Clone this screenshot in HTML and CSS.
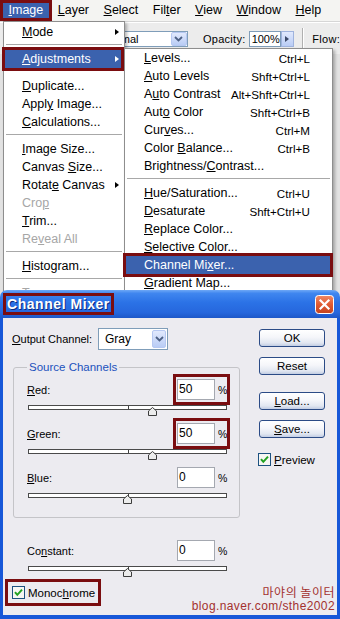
FILE: index.html
```html
<!DOCTYPE html>
<html lang="en">
<head>
    <meta charset="UTF-8">
    <meta name="viewport" content="width=device-width, initial-scale=1.0">
    <title>Channel Mixer</title>
    <link rel="stylesheet" href="styles.css">
</head>
<body>
    <div class="screen">
        <!-- Menu bar -->
        <div class="menubar">
            <span class="menubar-item active mark"><u>I</u>mage</span>
            <span class="menubar-item"><u>L</u>ayer</span>
            <span class="menubar-item"><u>S</u>elect</span>
            <span class="menubar-item">Fil<u>t</u>er</span>
            <span class="menubar-item"><u>V</u>iew</span>
            <span class="menubar-item"><u>W</u>indow</span>
            <span class="menubar-item"><u>H</u>elp</span>
        </div>

        <!-- Options bar -->
        <div class="toolbar">
            <div class="tb-combo">
                <span class="tb-combo-text">Normal</span>
                <span class="tb-combo-btn">
                    <svg width="9" height="6" viewBox="0 0 9 6"><polyline points="1,1 4.5,4.5 8,1" fill="none" stroke="#4d6185" stroke-width="1.8"/></svg>
                </span>
            </div>
            <span class="tb-label">Opacity:</span>
            <span class="tb-input">100%</span>
            <span class="tb-spin"><span class="arrow"></span></span>
            <span class="tb-sep"></span>
            <span class="tb-label tb-flow">Flow:</span>
        </div>

        <div class="workspace"></div>

        <!-- Image menu -->
        <div class="menu image-menu">
            <div class="item"><span><u>M</u>ode</span><span class="arrow"></span></div>
            <div class="sep"></div>
            <div class="item selected mark"><span><u>A</u>djustments</span><span class="arrow"></span></div>
            <div class="gap"></div>
            <div class="item"><span><u>D</u>uplicate...</span></div>
            <div class="item"><span>Appl<u>y</u> Image...</span></div>
            <div class="item"><span><u>C</u>alculations...</span></div>
            <div class="sep"></div>
            <div class="item"><span><u>I</u>mage Size...</span></div>
            <div class="item"><span>Canvas <u>S</u>ize...</span></div>
            <div class="item"><span>Rotat<u>e</u> Canvas</span><span class="arrow"></span></div>
            <div class="item disabled"><span>Cro<u>p</u></span></div>
            <div class="item"><span><u>T</u>rim...</span></div>
            <div class="item disabled"><span>Re<u>v</u>eal All</span></div>
            <div class="sep"></div>
            <div class="item"><span><u>H</u>istogram...</span></div>
            <div class="sep"></div>
            <div class="item disabled"><span><u>T</u>rap...</span></div>
        </div>

        <!-- Adjustments submenu -->
        <div class="menu adjust-menu">
            <div class="item"><span><u>L</u>evels...</span><span class="key">Ctrl+L</span></div>
            <div class="item"><span><u>A</u>uto Levels</span><span class="key">Shft+Ctrl+L</span></div>
            <div class="item"><span>A<u>u</u>to Contrast</span><span class="key">Alt+Shft+Ctrl+L</span></div>
            <div class="item"><span>Aut<u>o</u> Color</span><span class="key">Shft+Ctrl+B</span></div>
            <div class="item"><span>Cur<u>v</u>es...</span><span class="key">Ctrl+M</span></div>
            <div class="item"><span>Color <u>B</u>alance...</span><span class="key">Ctrl+B</span></div>
            <div class="item"><span>Brightness/<u>C</u>ontrast...</span></div>
            <div class="sep"></div>
            <div class="item"><span><u>H</u>ue/Saturation...</span><span class="key">Ctrl+U</span></div>
            <div class="item"><span><u>D</u>esaturate</span><span class="key">Shft+Ctrl+U</span></div>
            <div class="item"><span><u>R</u>eplace Color...</span></div>
            <div class="item"><span><u>S</u>elective Color...</span></div>
            <div class="item selected mark"><span>Channel Mi<u>x</u>er...</span></div>
            <div class="item"><span><u>G</u>radient Map...</span></div>
            <div class="item"><span>Photo <u>F</u>ilter...</span></div>
        </div>

        <!-- Channel Mixer dialog -->
        <div class="dialog">
            <div class="titlebar">
                <span class="title mark">Channel Mixer</span>
                <span class="close">
                    <svg width="19" height="19" viewBox="0 0 19 19">
                        <defs>
                            <linearGradient id="closeFill" x1="0" y1="0" x2="0" y2="1">
                                <stop offset="0" stop-color="#f08a66"/>
                                <stop offset="0.5" stop-color="#e05a32"/>
                                <stop offset="1" stop-color="#c4431f"/>
                            </linearGradient>
                        </defs>
                        <rect x="0.5" y="0.5" width="18" height="18" rx="3" fill="url(#closeFill)" stroke="#ffffff"/>
                        <path d="M5.5 5.5 L13.5 13.5 M13.5 5.5 L5.5 13.5" stroke="#ffffff" stroke-width="2.2" stroke-linecap="square"/>
                    </svg>
                </span>
            </div>

            <div class="dialog-body">
                <div class="controls">
                    <div class="output-row">
                        <span class="output-label"><u>O</u>utput Channel:</span>
                        <div class="select">
                            <span class="select-value">Gray</span>
                            <span class="select-btn">
                                <svg width="9" height="6" viewBox="0 0 9 6"><polyline points="1,1 4.5,4.5 8,1" fill="none" stroke="#4d6185" stroke-width="1.8"/></svg>
                            </span>
                        </div>
                    </div>

                    <fieldset class="group">
                        <legend>Source Channels</legend>

                        <div class="channel">
                            <span><u>R</u>ed:</span>
                            <span class="value-box mark"><span class="field">50</span><span class="pct">%</span></span>
                        </div>
                        <div class="slider">
                            <svg class="thumb" style="left: calc(62.5% - 4.5px)" width="9" height="9" viewBox="0 0 9 9"><polygon points="4.5,0.5 8.5,4 8.5,8.5 0.5,8.5 0.5,4" fill="#ececec" stroke="#3c3c3c"/></svg>
                        </div>

                        <div class="channel">
                            <span><u>G</u>reen:</span>
                            <span class="value-box mark"><span class="field">50</span><span class="pct">%</span></span>
                        </div>
                        <div class="slider">
                            <svg class="thumb" style="left: calc(62.5% - 4.5px)" width="9" height="9" viewBox="0 0 9 9"><polygon points="4.5,0.5 8.5,4 8.5,8.5 0.5,8.5 0.5,4" fill="#ececec" stroke="#3c3c3c"/></svg>
                        </div>

                        <div class="channel">
                            <span><u>B</u>lue:</span>
                            <span class="value-box"><span class="field">0</span><span class="pct">%</span></span>
                        </div>
                        <div class="slider">
                            <svg class="thumb" style="left: calc(50% - 4.5px)" width="9" height="9" viewBox="0 0 9 9"><polygon points="4.5,0.5 8.5,4 8.5,8.5 0.5,8.5 0.5,4" fill="#ececec" stroke="#3c3c3c"/></svg>
                        </div>
                    </fieldset>

                    <div class="constant">
                        <div class="channel">
                            <span>Co<u>n</u>stant:</span>
                            <span class="value-box"><span class="field">0</span><span class="pct">%</span></span>
                        </div>
                        <div class="slider">
                            <svg class="thumb" style="left: calc(50% - 4.5px)" width="9" height="9" viewBox="0 0 9 9"><polygon points="4.5,0.5 8.5,4 8.5,8.5 0.5,8.5 0.5,4" fill="#ececec" stroke="#3c3c3c"/></svg>
                        </div>
                    </div>

                    <div class="check mono mark">
                        <svg class="box" width="13" height="13" viewBox="0 0 13 13">
                            <rect x="0.5" y="0.5" width="12" height="12" fill="#f6f6f3" stroke="#1c5180"/>
                            <polyline points="3,6.2 5.3,8.8 10,3.6" fill="none" stroke="#21a121" stroke-width="2"/>
                        </svg>
                        <span>Monoc<u>h</u>rome</span>
                    </div>
                </div>

                <div class="buttons">
                    <span class="btn">OK</span>
                    <span class="btn btn-reset">Reset</span>
                    <span class="btn btn-load"><u>L</u>oad...</span>
                    <span class="btn btn-save"><u>S</u>ave...</span>
                    <div class="check preview">
                        <svg class="box" width="13" height="13" viewBox="0 0 13 13">
                            <rect x="0.5" y="0.5" width="12" height="12" fill="#f6f6f3" stroke="#1c5180"/>
                            <polyline points="3,6.2 5.3,8.8 10,3.6" fill="none" stroke="#21a121" stroke-width="2"/>
                        </svg>
                        <span><u>P</u>review</span>
                    </div>
                </div>

                <div class="watermark">
                    <div class="wm-title">마야의 놀이터</div>
                    <div class="wm-url">blog.naver.com/sthe2002</div>
                </div>
            </div>
        </div>
    </div>
</body>
</html>
```

FILE: styles.css
```css
* {
    box-sizing: border-box;
}

body {
    margin: 0;
    font-family: "Liberation Sans", Arial, sans-serif;
    color: #000;
}

.screen {
    position: relative;
    width: 340px;
    height: 619px;
    overflow: hidden;
    background: #e2e2e2;
}

/* red highlight frames */
.mark {
    outline: 3px solid #7a0d10;
}

/* Menu bar */
.menubar {
    display: flex;
    align-items: center;
    height: 22px;
    padding-left: 3px;
    background: #f4f4f2;
    border-bottom: 1px solid #d6d6d6;
    font-size: 12.5px;
}

.menubar-item {
    height: 15px;
    line-height: 15px;
    padding: 0 5.5px;
    margin-right: 3.5px;
}

.menubar-item.active {
    background: #3b62ae;
    color: #fff;
}

/* Options bar */
.toolbar {
    display: flex;
    align-items: center;
    height: 32px;
    padding-left: 99px;
    background: #ececec;
    border-top: 1px solid #fff;
    font-size: 11px;
}

.tb-combo {
    display: flex;
    width: 93px;
    height: 16px;
    border: 1px solid #7f9db9;
    background: #fff;
}

.tb-combo-text {
    padding-left: 3px;
    line-height: 14px;
}

.tb-combo-btn,
.select-btn {
    display: flex;
    align-items: center;
    justify-content: center;
    margin-left: auto;
    background: linear-gradient(#e1e9fd, #b9ccf5);
    border: 1px solid #b6c8f2;
    border-radius: 2px;
}

.tb-combo-btn {
    width: 16px;
}

.tb-label {
    margin-left: 15px;
    letter-spacing: 0.3px;
}

.tb-input {
    width: 33px;
    height: 16px;
    margin-left: 3px;
    padding-left: 2px;
    line-height: 14px;
    border: 1px solid #7f9db9;
    background: #fff;
}

.tb-spin {
    display: flex;
    align-items: center;
    justify-content: center;
    width: 14px;
    height: 16px;
    color: #3c4a6a;
    background: linear-gradient(#e1e9fd, #b9ccf5);
    border: 1px solid #9fb3dd;
}

.tb-sep {
    width: 2px;
    height: 22px;
    margin-left: 8px;
    border-left: 1px solid #b0b0b0;
    border-right: 1px solid #fff;
}

.tb-flow {
    margin-left: 8px;
}

.workspace {
    height: 565px;
    background: #e2e2e2;
}

/* Drop-down menus */
.menu {
    position: absolute;
    background: #fff;
    border: 1px solid #8e8e8e;
    box-shadow: 2px 2px 3px rgba(0, 0, 0, 0.28);
    font-size: 12.5px;
}

.image-menu {
    left: 3px;
    top: 21px;
    width: 122px;
    padding: 1px 0 4px;
}

.adjust-menu {
    left: 124px;
    top: 48px;
    width: 209px;
}

.item {
    display: flex;
    align-items: center;
    justify-content: space-between;
    height: 18px;
    white-space: nowrap;
}

.image-menu .item {
    margin: 0 3px 0 1px;
    padding: 0 2px 0 17px;
}

.adjust-menu .item {
    margin: 0 2px 0 1px;
    padding: 0 20px 0 18px;
}

.key {
    font-size: 11.6px;
}

.item.selected {
    background: #3b62ae;
    color: #fff;
}

.item.disabled {
    color: #a6a6a6;
}

.arrow {
    width: 0;
    height: 0;
    border-left: 4px solid currentColor;
    border-top: 3.5px solid transparent;
    border-bottom: 3.5px solid transparent;
}

.sep {
    height: 1px;
    margin: 3px 2px 5px;
    background: #a8a8a8;
}

.gap {
    height: 9px;
}

/* Dialog window */
.dialog {
    position: absolute;
    left: 0;
    top: 290px;
    width: 340px;
    height: 329px;
    display: flex;
    flex-direction: column;
    font-size: 11px;
}

.titlebar {
    display: flex;
    align-items: center;
    justify-content: space-between;
    height: 28px;
    padding: 0 6px;
    border-radius: 7px 7px 0 0;
    background: linear-gradient(#6ea8f6 0%, #3f86ef 12%, #2b72e6 45%, #2667dd 80%, #1d57c8 100%);
}

.title {
    padding: 0 1px;
    line-height: 16px;
    color: #fff;
    font-size: 14px;
    font-weight: bold;
    letter-spacing: 0.55px;
    text-shadow: 1px 1px 0 #0b2a80;
}

.close {
    display: flex;
    margin-top: 1px;
}

.dialog-body {
    position: relative;
    flex: 1;
    display: grid;
    grid-template-columns: 228px 66px;
    column-gap: 19px;
    align-items: start;
    padding: 10px 12px 0 9px;
    background: #ecebf0;
    border: 3px solid #1757d8;
    border-top: none;
    border-bottom-width: 4px;
}

.output-row {
    display: flex;
    align-items: center;
    height: 22px;
}

.output-label {
    width: 86px;
}

.select {
    display: flex;
    align-items: stretch;
    width: 70px;
    height: 22px;
    padding: 1px;
    border: 1px solid #7f9db9;
    background: #fff;
}

.select-value {
    padding-left: 5px;
    line-height: 18px;
    font-size: 12px;
}

.select-btn {
    width: 14px;
}

/* Source channels group */
.group {
    margin: 11px 0 0 1px;
    padding: 3px 12px 8px 13px;
    min-width: 0;
    border: 1px solid #c4c4c8;
    border-radius: 3px;
}

.group legend {
    padding: 0 2px;
    line-height: 13px;
    font-size: 11.5px;
    color: #2151bd;
}

.channel {
    display: flex;
    align-items: center;
    justify-content: space-between;
    height: 25px;
}

.value-box {
    display: flex;
    align-items: center;
    gap: 3px;
    padding: 2px 1px;
}

.field {
    width: 38px;
    height: 21px;
    padding-left: 1px;
    line-height: 19px;
    font-size: 12px;
    border: 1px solid #a4a8b0;
    background: #fff;
}

.pct {
    width: 8px;
    font-size: 10.5px;
}

.slider {
    position: relative;
    width: 199px;
    height: 5px;
    margin: 3px 0 11px 1px;
    border: 1px solid #4a4a4a;
    background: #fff;
}

.slider::before {
    content: '';
    position: absolute;
    left: 50%;
    top: 0;
    width: 1px;
    height: 100%;
    background: #404040;
}

.thumb {
    position: absolute;
    top: 1px;
}

.constant {
    margin-top: 20px;
    padding: 0 13px 0 15px;
}

/* Checkboxes */
.check {
    display: flex;
    align-items: center;
    gap: 3px;
    width: max-content;
}

.check .box {
    flex-shrink: 0;
}

.mono {
    margin: 7px 0 0 -4px;
    padding: 4px 3px 4px 4px;
    font-size: 11.5px;
}

.preview {
    margin: 15px 0 0 -1px;
    font-size: 11.5px;
}

/* Buttons */
.buttons {
    display: flex;
    flex-direction: column;
    padding-top: 1px;
}

.btn {
    display: flex;
    align-items: center;
    justify-content: center;
    height: 18px;
    font-size: 11.5px;
    border: 1px solid #2b4b86;
    border-radius: 3px;
    background: linear-gradient(#ffffff 0%, #f5f6fa 45%, #e2e7f1 80%, #c2cde3 100%);
}

.btn-reset {
    margin-top: 10px;
}

.btn-load {
    margin-top: 17px;
}

.btn-save {
    margin-top: 10px;
}

/* Blog watermark */
.watermark {
    position: absolute;
    right: 2px;
    bottom: 1px;
    text-align: right;
    line-height: 15px;
    font-size: 12px;
    color: #a3302e;
}

.wm-title {
    font-family: "Noto Sans CJK KR", "Liberation Sans", sans-serif;
    letter-spacing: 0.5px;
}

.wm-url {
    letter-spacing: 0.4px;
}
```
